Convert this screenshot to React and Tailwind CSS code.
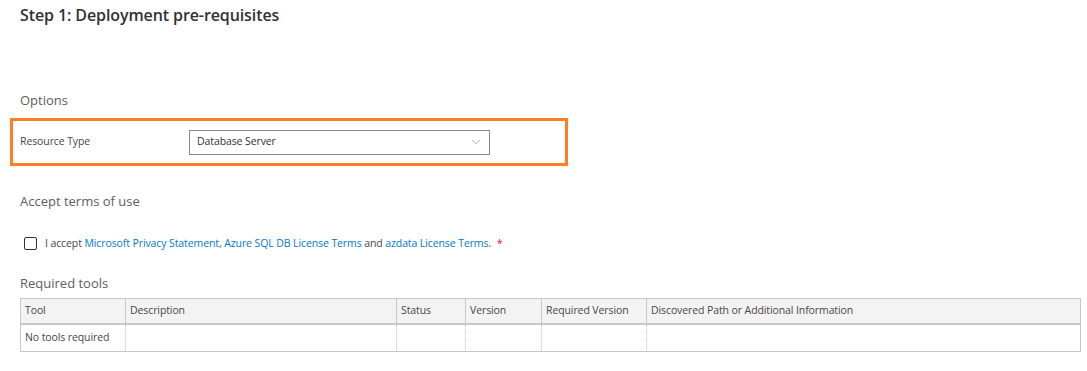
import { ChevronDown } from 'lucide-react';

const columns = [
  { label: 'Tool', width: 'w-[105px]' },
  { label: 'Description', width: 'w-[271px]' },
  { label: 'Status', width: 'w-[69px]' },
  { label: 'Version', width: 'w-[76px]' },
  { label: 'Required Version', width: 'w-[105px]' },
  { label: 'Discovered Path or Additional Information', width: 'flex-1' },
];

export default function App() {
  return (
    <div className="w-[1087px] h-[371px] bg-white text-[#323130] font-['Open_Sans',sans-serif] overflow-hidden">
      <div className="pl-5 pt-[4px]">
        <h2 className="text-[16px] font-semibold leading-[22px] text-[#323130] tracking-[-0.1px]">
          Step 1: Deployment pre-requisites
        </h2>
      </div>

      <div className="pl-5 mt-[64px] text-[13px] leading-[20px] text-[#605e5c]">Options</div>

      <div className="ml-[10px] mt-[8px] w-[558px] h-[48px] border-[3px] border-[#fd7e25] flex items-center pl-[7px]">
        <span className="w-[169px] text-[10.5px] tracking-[-0.1px] text-[#484644]">Resource Type</span>
        <div className="w-[301px] h-[25px] border border-[#8a8886] flex items-center justify-between pl-[7px] pr-[6px]">
          <span className="text-[10.5px] tracking-[-0.1px] text-[#323130]">Database Server</span>
          <ChevronDown className="w-[14px] h-[14px] text-[#8a8886]" strokeWidth={1.2} />
        </div>
      </div>

      <div className="pl-5 mt-[25px] text-[13px] leading-[20px] text-[#605e5c]">Accept terms of use</div>

      <div className="pl-6 mt-[25px] flex items-center gap-2 text-[10.5px] tracking-[-0.1px] text-[#484644]">
        <span className="w-[13px] h-[13px] border border-[#323130] rounded-[2px] bg-white" />
        <span>
          I accept <a className="text-[#0078d4]">Microsoft Privacy Statement, Azure SQL DB License Terms</a> and{' '}
          <a className="text-[#0078d4]">azdata License Terms</a>. <span className="text-[#e81123] ml-[3px]">*</span>
        </span>
      </div>

      <div className="pl-5 mt-[21px] text-[13px] leading-[20px] text-[#605e5c]">Required tools</div>

      <div className="ml-5 mt-[5px] w-[1061px] text-[10.5px] tracking-[-0.1px] text-[#484644]">
        <div className="flex h-[27px] bg-[#f3f3f3] border border-[#c8c8c8] border-b-2">
          {columns.map((c, i) => (
            <div
              key={c.label}
              className={`${c.width} flex items-center px-[4px] ${i < columns.length - 1 ? 'border-r border-[#c8c8c8]' : ''}`}
            >
              {c.label}
            </div>
          ))}
        </div>
        <div className="flex h-[27px] border-l border-r border-b border-[#c8c8c8] border-r-dotted">
          {columns.map((c, i) => (
            <div
              key={c.label}
              className={`${c.width} flex items-center px-[4px] ${i < columns.length - 1 ? 'border-r border-dotted border-[#c8c8c8]' : ''}`}
            >
              {i === 0 ? 'No tools required' : ''}
            </div>
          ))}
        </div>
      </div>
    </div>
  );
}
